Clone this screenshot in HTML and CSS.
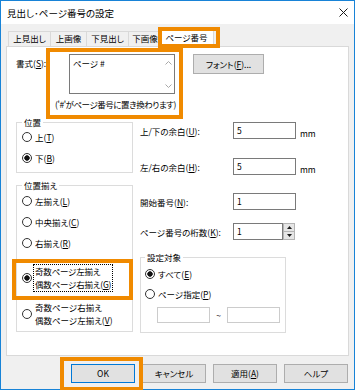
FILE: index.html
```html
<!DOCTYPE html>
<html lang="ja">
<head>
<meta charset="utf-8">
<title>見出し･ページ番号の設定</title>
<link rel="stylesheet" href="styles.css">
</head>
<body>
<div class="window">
  <div class="titlebar">
    <span class="title">見出し･ページ番号の設定</span>
    <svg class="close" width="9" height="9" viewBox="0 0 9 9"><path d="M0.5 0.5L8.5 8.5M8.5 0.5L0.5 8.5" stroke="#1a1a1a" stroke-width="1" fill="none"/></svg>
  </div>

  <div class="tabs">
    <div class="tab tab1">上見出し</div>
    <div class="tab tab2">上画像</div>
    <div class="tab tab3">下見出し</div>
    <div class="tab tab4">下画像</div>
    <div class="tab active">ページ番号</div>
  </div>

  <div class="panel">
    <div class="format">
      <div class="format-label">書式(<u>S</u>):</div>
      <div class="textarea">
        <span class="ta-text">ページ #</span>
        <div class="scroll">
          <svg width="7" height="4" viewBox="0 0 7 4"><path d="M0.5 3.5L3.5 0.5L6.5 3.5" stroke="#a8a8a8" fill="none"/></svg>
          <svg width="7" height="4" viewBox="0 0 7 4"><path d="M0.5 0.5L3.5 3.5L6.5 0.5" stroke="#a8a8a8" fill="none"/></svg>
        </div>
      </div>
      <div class="btn font-btn">フォント(<u>F</u>)...</div>
      <div class="hint">('#'がページ番号に置き換わります)</div>
    </div>

    <div class="columns">
      <div class="left">
        <fieldset class="group pos">
          <legend>位置</legend>
          <div class="radio first"><span class="circle"></span>上(<u>T</u>)</div>
          <div class="radio"><span class="circle on"></span>下(<u>B</u>)</div>
        </fieldset>

        <fieldset class="group align">
          <legend>位置揃え</legend>
          <div class="radio first"><span class="circle"></span>左揃え(<u>L</u>)</div>
          <div class="radio"><span class="circle"></span>中央揃え(<u>C</u>)</div>
          <div class="radio"><span class="circle"></span>右揃え(<u>R</u>)</div>
          <div class="radio double gap-a"><span class="circle on"></span><span class="focus">奇数ページ左揃え<br>偶数ページ右揃え(<u>G</u>)</span></div>
          <div class="radio double gap-b"><span class="circle"></span><span>奇数ページ右揃え<br>偶数ページ左揃え(<u>V</u>)</span></div>
        </fieldset>
      </div>

      <div class="right">
        <div class="field f1">
          <span class="field-label">上/下の余白(<u>U</u>):</span>
          <div class="input">5</div>
          <span class="unit">mm</span>
        </div>
        <div class="field f2">
          <span class="field-label">左/右の余白(<u>H</u>):</span>
          <div class="input">5</div>
          <span class="unit">mm</span>
        </div>
        <div class="field f3">
          <span class="field-label">開始番号(<u>N</u>):</span>
          <div class="input">1</div>
        </div>
        <div class="field f4">
          <span class="field-label">ページ番号の桁数(<u>K</u>):</span>
          <div class="input spin-input">1</div>
          <div class="spin">
            <div class="sb"><svg width="5" height="3" viewBox="0 0 5 3"><path d="M0 3L2.5 0L5 3Z" fill="#1a1a1a"/></svg></div>
            <div class="sb"><svg width="5" height="3" viewBox="0 0 5 3"><path d="M0 0L2.5 3L5 0Z" fill="#1a1a1a"/></svg></div>
          </div>
        </div>

        <fieldset class="group target">
          <legend>設定対象</legend>
          <div class="radio tfirst"><span class="circle on"></span>すべて(<u>E</u>)</div>
          <div class="radio trow"><span class="circle"></span>ページ指定(<u>P</u>)</div>
          <div class="range">
            <div class="input small"></div>
            <span class="tilde">~</span>
            <div class="input small"></div>
          </div>
        </fieldset>
      </div>
    </div>
  </div>

  <div class="buttons">
    <div class="btn dlg default">OK</div>
    <div class="btn dlg">キャンセル</div>
    <div class="btn dlg">適用(<u>A</u>)</div>
    <div class="btn dlg">ヘルプ</div>
  </div>

  <div class="mark mark-tab"></div>
  <div class="mark mark-format"></div>
  <div class="mark mark-align"></div>
  <div class="mark mark-ok"></div>
</div>
</body>
</html>
```

FILE: styles.css
```css
* { box-sizing: border-box; }
html, body { margin: 0; padding: 0; }
body {
  width: 355px;
  height: 390px;
  overflow: hidden;
  background: #fff;
  font-family: "Noto Sans CJK JP", "Noto Sans", sans-serif;
  font-size: 8.5px;
  line-height: 12px;
  color: #000;
  font-feature-settings: "palt";
}
u { text-underline-offset: 1px; }

.window {
  position: relative;
  width: 355px;
  height: 390px;
  border: 1px solid #1883d7;
  background: #f0f0f0;
  display: flex;
  flex-direction: column;
}

.titlebar {
  flex: none;
  height: 23px;
  background: #fff;
  display: flex;
  align-items: center;
  justify-content: space-between;
  padding: 0 6px 0 6px;
}
.title { font-size: 9.5px; }
.close { display: block; }

.tabs {
  flex: none;
  position: relative;
  z-index: 1;
  display: flex;
  align-items: flex-end;
  height: 17px;
  margin-top: 5px;
  padding-left: 7px;
}
.tab {
  height: 15px;
  border: 1px solid #d9d9d9;
  border-bottom: none;
  background: #f0f0f0;
  text-align: center;
  line-height: 13px;
  white-space: nowrap;
}
.tab + .tab { margin-left: -1px; }
.tab1 { width: 43px; }
.tab2 { width: 37px; }
.tab3 { width: 43px; }
.tab4 { width: 34px; }
.tab.active {
  width: 55px;
  height: 18px;
  margin-left: -3px;
  margin-bottom: -1px;
  background: #fff;
  line-height: 14px;
}

.panel {
  flex: none;
  height: 310px;
  margin: 0 5px 0 5px;
  border: 1px solid #d9d9d9;
  background: #fff;
  padding: 7px 0 0 9px;
}

.format {
  display: grid;
  grid-template-columns: 53px 106px auto;
  align-items: start;
}
.format-label { padding-top: 3px; }
.textarea {
  height: 40px;
  border: 1px solid #7a7a7a;
  background: #fff;
  display: flex;
  justify-content: space-between;
}
.ta-text { margin: 2px 0 0 3px; }
.scroll {
  display: flex;
  flex-direction: column;
  justify-content: space-between;
  padding: 6px 2px 5px 0;
}
.scroll svg { display: block; }

.btn {
  background: #e1e1e1;
  border: 1px solid #adadad;
  text-align: center;
  white-space: nowrap;
}
.font-btn {
  width: 71px;
  height: 20px;
  margin-left: 18px;
  line-height: 18px;
}
.hint {
  grid-column: 1 / 3;
  justify-self: end;
  margin-top: 4px;
  margin-right: -1px;
  letter-spacing: -0.45px;
  white-space: nowrap;
}

.columns {
  display: grid;
  grid-template-columns: 117px auto;
  column-gap: 7px;
  margin-top: 6px;
  align-items: start;
}

.group {
  margin: 0;
  min-width: 0;
  border: 1px solid #dcdcdc;
  padding: 0 0 4px 5px;
}
.group legend {
  padding: 0 2px;
  line-height: 12px;
}
.align { margin-top: 6px; padding-bottom: 3px; }

.radio {
  display: flex;
  align-items: center;
  height: 21px;
  white-space: nowrap;
}
.pos .first { margin-top: -2px; }
.align .first { margin-top: -1px; }
.circle {
  flex: none;
  width: 10px;
  height: 10px;
  border: 1px solid #333;
  border-radius: 50%;
  background: #fff;
  margin-right: 3px;
}
.circle.on {
  background: radial-gradient(circle at center, #111 0 2.4px, #fff 3px);
}
.radio.double {
  height: 28px;
  line-height: 13px;
}
.gap-a { margin-top: 11px; }
.gap-b { margin-top: 8px; }
.focus {
  border: 1px dotted #000;
  margin-left: -2px;
  padding: 0 1px;
  letter-spacing: -0.2px;
}

.field {
  display: flex;
  align-items: center;
  white-space: nowrap;
}
.f1 { margin-top: 6px; }
.f2 { margin-top: 19px; }
.f3 { margin-top: 18px; }
.f4 { margin-top: 13px; }
.field-label { width: 93px; }
.input {
  width: 63px;
  height: 17px;
  border: 1px solid #7a7a7a;
  background: #fff;
  padding-left: 3px;
  line-height: 15px;
}
.unit {
  align-self: flex-end;
  margin-left: 4px;
  line-height: 12px;
}
.spin-input { width: 50px; }
.spin {
  display: flex;
  flex-direction: column;
  width: 12px;
  height: 17px;
}
.sb {
  flex: 1;
  background: #e6e6e6;
  border: 1px solid #b4b4b4;
  display: flex;
  align-items: center;
  justify-content: center;
}
.sb + .sb { border-top: none; }
.sb svg { display: block; }

.target {
  width: 146px;
  margin-top: 11px;
  padding: 0 0 9px 4px;
}
.target .radio { height: 20px; }
.tfirst { margin-top: 1px; }
.range {
  display: flex;
  align-items: center;
  margin-top: 3px;
  padding-left: 12px;
}
.input.small {
  width: 53px;
  height: 16px;
  border-color: #cccccc;
}
.tilde {
  width: 17px;
  text-align: center;
}

.buttons {
  flex: none;
  display: flex;
  justify-content: flex-end;
  gap: 7px;
  margin-top: 8px;
  padding-right: 6px;
}
.dlg {
  width: 64px;
  height: 19px;
  line-height: 17px;
}
.dlg.default { border-color: #0078d7; }

.mark {
  position: absolute;
  z-index: 5;
  border: 4px solid #f08a00;
}
.mark-tab { left: 157px; top: 26px; width: 62px; height: 21px; }
.mark-format { left: 45px; top: 47px; width: 137px; height: 71px; }
.mark-align { left: 11px; top: 258px; width: 121px; height: 41px; }
.mark-ok { left: 59px; top: 356px; width: 83px; height: 34px; }
```
